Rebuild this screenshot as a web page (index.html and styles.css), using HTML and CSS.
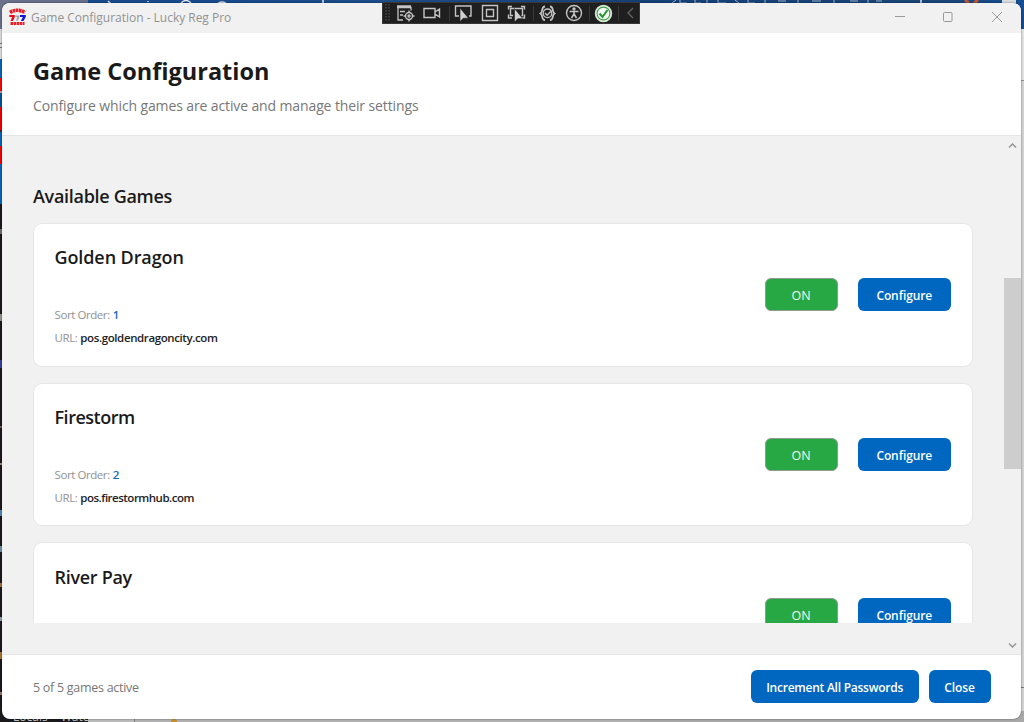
FILE: index.html
```html
<!DOCTYPE html>
<html lang="en">
<head>
<meta charset="utf-8">
<title>Game Configuration - Lucky Reg Pro</title>
<link rel="stylesheet" href="styles.css">
</head>
<body>
<div class="desktop">
  <div class="edge-top"><svg width="1024" height="8" viewBox="0 0 1024 8" fill="none">
    <path d="M108 1l3 3M181 3q5-5 10 0M217 4q5-4 10 0M148 1v1M323 0v3M921 0v3" stroke="#dfe6ef" stroke-width="1.5"/>
    <path d="M965 0l4 3M978 0l-4 3" stroke="#c4542c" stroke-width="3"/>
    <path d="M1002 0h14v3h-14z" fill="#d8dde2"/>
    <path d="M672 3l4-3M680 0v3h7M695 0v3h6M707 0v3M718 0v3h8M735 0l4 3M748 0v3h7M765 0v3M778 1h8M798 0v3M812 1h9M834 0v3M850 1h8M868 0v3M876 1h6" stroke="#9fb2ca"/>
  </svg></div>
  <div class="edge-left"></div>
  <div class="edge-right"></div>
  <div class="edge-bottom"><span class="tab-strip"><span>Locals</span><span>Watch</span></span><i class="dot"></i></div>

  <div class="window">
    <div class="titlebar">
      <svg class="app-icon" width="17" height="18" viewBox="0 0 17 18">
        <path d="M1 4.500q7-4.500 15 0" fill="none" stroke="#e8202a" stroke-width="3.600" stroke-dasharray="2.600 .5"/>
        <path d="M.3 7h5.500v2L4 13H1.500l1.600-4H.3z" fill="#e01018"/>
        <path d="M6.300 7.500h4v1.500L9 12.500H7L8.300 9h-2z" fill="#9ba0a8"/>
        <path d="M11 7h5.700v2L14.500 13h-2.600l2-4H11z" fill="#1414d8"/>
        <path d="M1.500 15.500h14" stroke="#e8202a" stroke-width="3" stroke-dasharray="2.500 .5"/>
      </svg>
      <span class="caption">Game Configuration - Lucky Reg Pro</span>
      <svg class="controls" width="112" height="14" viewBox="0 0 112 14" fill="none" stroke="#9a9a9a">
        <path d="M1 6.500h10"/><rect x="49.500" y="2.500" width="8.500" height="9" rx="1"/><path d="M98 2l10 10M108 2L98 12"/>
      </svg>
    </div>
    <header class="header">
      <h1>Game Configuration</h1>
      <p>Configure which games are active and manage their settings</p>
    </header>
    <main class="content">
      <div class="viewport">
        <h2>Available Games</h2>
        <section class="card">
          <div class="info"><h3 class="t1">Golden Dragon</h3>
            <p class="meta"><span class="k-sort">Sort Order:</span> <b class="num">1</b></p>
            <p class="meta"><span class="k-url">URL:</span> <b class="u1">pos.goldendragoncity.com</b></p></div>
          <button class="toggle">ON</button><button class="btn configure">Configure</button>
        </section>
        <section class="card">
          <div class="info"><h3 class="t2">Firestorm</h3>
            <p class="meta"><span class="k-sort">Sort Order:</span> <b class="num">2</b></p>
            <p class="meta"><span class="k-url">URL:</span> <b class="u2">pos.firestormhub.com</b></p></div>
          <button class="toggle">ON</button><button class="btn configure">Configure</button>
        </section>
        <section class="card">
          <div class="info"><h3 class="t3">River Pay</h3></div>
          <button class="toggle">ON</button><button class="btn configure">Configure</button>
        </section>
      </div>
      <div class="scrollbar">
        <svg width="17" height="17" viewBox="0 0 17 17" fill="none" stroke="#929292" stroke-width="1.400"><path d="M5 11.500L8.500 8l3.500 3.500"/></svg>
        <div class="thumb"></div>
        <svg class="down" width="17" height="17" viewBox="0 0 17 17" fill="none" stroke="#929292" stroke-width="1.400"><path d="M5 6.500L8.500 10 12 6.500"/></svg>
      </div>
    </main>
    <footer class="footer">
      <span class="status">5 of 5 games active</span>
      <button class="btn increment">Increment All Passwords</button>
      <button class="btn close">Close</button>
    </footer>
  </div>

  <div class="debugbar">
    <svg width="258" height="22" viewBox="0 0 258 22" fill="none" stroke="#c4c4c4" stroke-width="1.400">
      <path d="M4 2v18M7 2v18" stroke="#484848" stroke-width="1.500" stroke-dasharray="1.500 1.500"/>
      <path d="M15 4h14M16 3.500V18h5M15 5.500h14v3" stroke-width="1.300"/><path d="M18 9.500h5M18 13h3"/>
      <circle cx="27" cy="14" r="3.500"/><circle cx="27" cy="14" r="1"/><path d="M27 8.500v2M27 17.500v2M21.500 14h2M30.500 14h2"/>
      <path d="M42 6.500h11v9H42zM53 10l4.500-3v8L53 12"/>
      <path d="M67.500 4v15M151.500 4v15M207.500 4v15M236.500 4v15" stroke="#393939" stroke-width="1"/>
      <path d="M77 14h-3.500V4h15.500v10h-2"/><path d="M78 6v13.500l3.300-3.300h5.200z" fill="#d0d0d0" stroke="#1f1f1f" stroke-width=".6"/>
      <path d="M100.500 3.500h15v15h-15zM104.500 7.500h7v7h-7z"/>
      <path d="M131 13.500h-2.500V6.500h12v7h-1M126.500 7.500v-3h3.500M139 4.500h3.500v3M126.500 12.500v3.500h3.500M139.500 16h3v-3.500"/><path d="M132.500 6.500V20l3.300-3.300h5z" fill="#d0d0d0" stroke="#1f1f1f" stroke-width=".6"/>
      <path d="M163 4.500c-4 0-1.500 4.500-4.500 7 3 2 .5 6.500 4.500 6.500M168 4.500c4 0 1.500 4.500 4.500 7-3 2-.5 6.500-4.500 6.500" stroke-width="1.800"/><circle cx="165.500" cy="11.300" r="4.300" stroke-width="1.300"/><path d="M163 11l2.200 2.200 4-4.200"/>
      <circle cx="192" cy="11" r="7.500"/><circle cx="192" cy="7" r="1" fill="#ccc"/><path d="M187.500 9.500h9M192 9.500v3M192 12l-2.500 4M192 12l2.500 4" stroke-width="1.600"/>
      <circle cx="221.500" cy="11.500" r="8" fill="#f4f6f4" stroke="#d5e8d5"/><circle cx="221.500" cy="11.500" r="6.400" stroke="#3e9e46" stroke-width="1.100"/><path d="M217.500 11.500l3 3.500 5-7" stroke="#239532" stroke-width="2"/>
      <path d="M251 6l-5 5 5 5" stroke="#666" stroke-width="1.300"/>
    </svg>
  </div>
</div>
</body>
</html>
```
FILE: styles.css
```css
* { box-sizing: border-box; }
body { margin: 0; overflow: hidden; font-family: "Open Sans", "Noto Sans", sans-serif; font-size: 12px; color: #1a1a1a; }
h1, h2, h3, p { margin: 0; white-space: nowrap; }
button { font: inherit; padding: 0; border: 0; white-space: nowrap; }
svg { display: block; }

.desktop { position: relative; width: 1024px; height: 722px; overflow: hidden; background: #b5b5b5; padding: 3px 0 0 2px; }
.edge-top { position: absolute; left: 0; top: 0; width: 1024px; height: 29px;
  background: linear-gradient(90deg, #68708c 0 88px, #174a8c 88px 250px, #1d4d88 380px, #153f78 640px, #1b4679 940px, #154d91 1024px); }
.edge-left { position: absolute; left: 0; top: 29px; width: 10px; height: 693px;
  background: linear-gradient(180deg, #dadada 0 14px, #777 14px 15px, #dadada 15px 18px, #777 18px 19px, #dadada 19px 30px,
    #0963b8 30px 49px, #f00a0a 49px 62px, #b7a09b 62px 64px, #07529b 64px 78px, #f00000 78px 101px, #4a2838 101px 103px,
    #0963b8 103px 117px, #f00000 117px 135px, #0963b8 135px 175px, #1c181d 175px 200px, #72706f 200px 205px, #1c181d 205px 285px,
    #92928c 285px 292px, #1c181d 292px 331px, #3a3c98 331px 339px, #1c181d 339px 397px, #765c58 397px 399px, #1c181d 399px 434px,
    #a28c7c 434px 436px, #1c181d 436px 481px, #5686ba 481px 487px, #1c181d 487px 517px, #6f90a5 517px 523px, #1c181d 523px 554px,
    #a2703a 554px 558px, #1c181d 558px 588px, #8fa1b0 588px 592px, #1c181d 592px 623px, #a87230 623px 630px, #1c181d 630px 663px, #a07868 663px 666px, #1c181d 666px); }
.edge-right { position: absolute; right: 0; top: 29px; width: 10px; height: 693px;
  background: linear-gradient(180deg, #e2e2e2 0 51px, #8e8e8e 51px 52px, #d2d2d2 52px 658px, #777 658px 659px, #d2d2d2 659px); }
.edge-bottom { position: absolute; left: 0; top: 711px; width: 1024px; height: 11px; overflow: hidden; display: flex; align-items: flex-start;
  background: linear-gradient(90deg, #1a1a1c 0 88px, #bcbcbc 88px 134px, #858585 134px 135px, #b2b2b2 135px 640px, #a8a8a8 640px); }
.tab-strip { display: flex; gap: 13px; width: 88px; padding-left: 13px; overflow: hidden; font-size: 12px; line-height: 12px; color: #c8c8c8; }
.dot { width: 6px; height: 6px; margin: 8px 0 0 83px; border-radius: 3px; background: #c8912c; }

.window { position: relative; width: 1019px; height: 715.5px; display: flex; flex-direction: column; border-radius: 8px; overflow: hidden; background: #fff; box-shadow: 0 0 2px rgba(0,0,0,.55); }
.titlebar { height: 30px; flex: none; display: flex; align-items: center; background: #f1f1f1; padding: 0 15.5px 2px 7px; }
.caption { margin-left: 5px; color: #929292; font-size: 12px; letter-spacing: -.02px; }
.controls { margin-left: auto; }

.header { height: 103px; flex: none; padding: 20px 31px 0; border-bottom: 1px solid #e5e5e5; }
h1 { font-size: 23.5px; line-height: 36px; font-weight: 700; }
.header p { margin-top: 6px; font-size: 14px; line-height: 22px; letter-spacing: -.12px; color: #777; }

.content { height: 518px; flex: none; display: flex; background: #f1f1f1; }
.viewport { width: 971.5px; height: 487px; padding: 46px 0 0 31px; overflow: hidden; }
h2 { font-size: 18px; line-height: 28px; font-weight: 600; letter-spacing: -.3px; margin-bottom: 12.9px; }
.card { width: 940px; height: 143.7px; margin-bottom: 16px; display: flex; align-items: center; background: #fff; border: 1px solid #e6e6e6; border-radius: 9px; padding: 0 21px 0 20.5px; }
.info { align-self: stretch; flex: 1; padding-top: 19.5px; }
h3 { font-size: 18px; line-height: 28px; font-weight: 600; margin-bottom: 31.6px; }
.t1 { letter-spacing: -.1px; }
.t2 { letter-spacing: -.48px; }
.t3 { letter-spacing: -.3px; }
.meta { font-size: 11.5px; line-height: 23.3px; color: #929292; }
.k-sort, .k-url { letter-spacing: -.42px; }
.meta b { font-weight: 600; color: #222; }
.meta .u1 { letter-spacing: -.39px; }
.meta .u2 { letter-spacing: -.5px; }
.meta .num { color: #1769b8; }
.toggle { width: 73px; height: 33px; margin-right: 20px; border-radius: 6px; border: 1.5px solid #8c9b8c; background: #28a745; color: #eefaf0; font-size: 12.5px; padding-top: 2px; }
.btn { height: 33px; border-radius: 6px; background: #0067c0; color: #fff; font-size: 12px; font-weight: 600; letter-spacing: -.1px; padding-top: 1px; }
.configure { width: 93.5px; padding-top: 2px; }

.scrollbar { width: 17px; margin-left: auto; display: flex; flex-direction: column; }
.thumb { height: 191px; margin-top: 125px; background: #cdcdcd; }
.down { margin-top: auto; }

.footer { flex: 1; display: flex; align-items: center; border-top: 1px solid #e5e5e5; padding: 0 30.4px 0 31px; }
.status { margin-right: auto; color: #777; font-size: 12.5px; letter-spacing: -.28px; padding-top: 1px; }
.increment { width: 168px; margin-right: 10px; letter-spacing: -.25px; }
.close { width: 62px; }

.debugbar { position: absolute; left: 382px; top: 2px; width: 258px; height: 22px; background: #1f1f1f; outline: 1px solid #383838; outline-offset: -1px; }
```
